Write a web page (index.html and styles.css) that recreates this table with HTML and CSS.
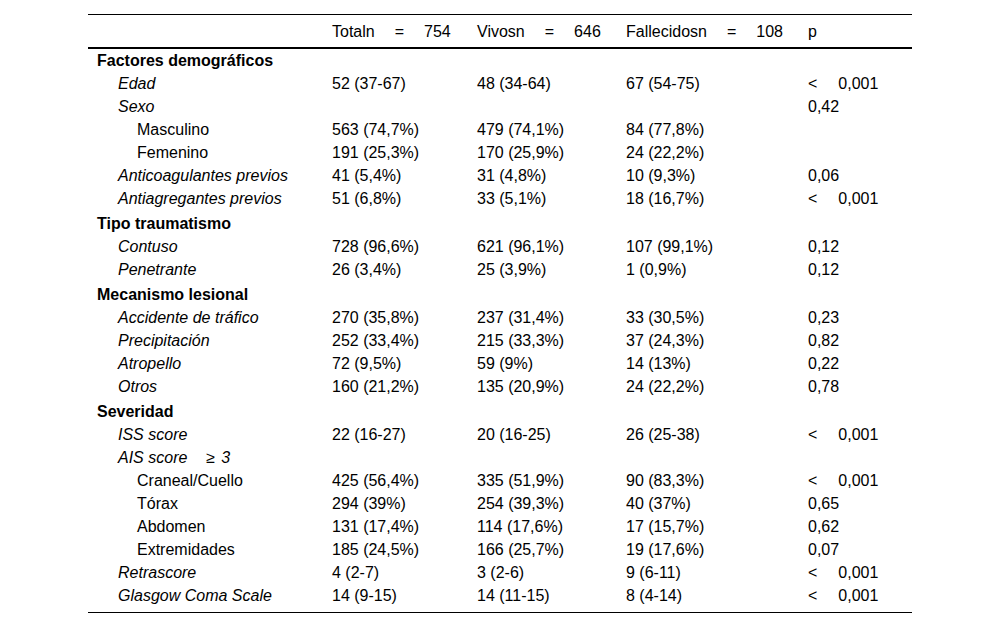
FILE: index.html
```html
<!DOCTYPE html>
<html lang="es">
<head>
<meta charset="utf-8">
<title>Tabla</title>
<link rel="stylesheet" href="styles.css">
</head>
<body>
<table class="data">
  <colgroup>
    <col class="c1"><col class="c2"><col class="c3"><col class="c4"><col class="c5">
  </colgroup>
  <thead>
    <tr>
      <th></th>
      <th>Totaln<span class="eq">=</span>754</th>
      <th>Vivosn<span class="eq">=</span>646</th>
      <th>Fallecidosn<span class="eq">=</span>108</th>
      <th>p</th>
    </tr>
  </thead>
  <tbody>
    <tr class="sec first"><td>Factores demográficos</td><td></td><td></td><td></td><td></td></tr>
    <tr><td class="l2">Edad</td><td>52 (37-67)</td><td>48 (34-64)</td><td>67 (54-75)</td><td><span class="lt">&lt;</span>0,001</td></tr>
    <tr><td class="l2">Sexo</td><td></td><td></td><td></td><td>0,42</td></tr>
    <tr><td class="l3">Masculino</td><td>563 (74,7%)</td><td>479 (74,1%)</td><td>84 (77,8%)</td><td></td></tr>
    <tr><td class="l3">Femenino</td><td>191 (25,3%)</td><td>170 (25,9%)</td><td>24 (22,2%)</td><td></td></tr>
    <tr><td class="l2">Anticoagulantes previos</td><td>41 (5,4%)</td><td>31 (4,8%)</td><td>10 (9,3%)</td><td>0,06</td></tr>
    <tr><td class="l2">Antiagregantes previos</td><td>51 (6,8%)</td><td>33 (5,1%)</td><td>18 (16,7%)</td><td><span class="lt">&lt;</span>0,001</td></tr>
    <tr class="sec"><td>Tipo traumatismo</td><td></td><td></td><td></td><td></td></tr>
    <tr><td class="l2">Contuso</td><td>728 (96,6%)</td><td>621 (96,1%)</td><td>107 (99,1%)</td><td>0,12</td></tr>
    <tr><td class="l2">Penetrante</td><td>26 (3,4%)</td><td>25 (3,9%)</td><td>1 (0,9%)</td><td>0,12</td></tr>
    <tr class="sec"><td>Mecanismo lesional</td><td></td><td></td><td></td><td></td></tr>
    <tr><td class="l2">Accidente de tráfico</td><td>270 (35,8%)</td><td>237 (31,4%)</td><td>33 (30,5%)</td><td>0,23</td></tr>
    <tr><td class="l2">Precipitación</td><td>252 (33,4%)</td><td>215 (33,3%)</td><td>37 (24,3%)</td><td>0,82</td></tr>
    <tr><td class="l2">Atropello</td><td>72 (9,5%)</td><td>59 (9%)</td><td>14 (13%)</td><td>0,22</td></tr>
    <tr><td class="l2">Otros</td><td>160 (21,2%)</td><td>135 (20,9%)</td><td>24 (22,2%)</td><td>0,78</td></tr>
    <tr class="sec"><td>Severidad</td><td></td><td></td><td></td><td></td></tr>
    <tr><td class="l2">ISS score</td><td>22 (16-27)</td><td>20 (16-25)</td><td>26 (25-38)</td><td><span class="lt">&lt;</span>0,001</td></tr>
    <tr><td class="l2">AIS score<span class="ge">≥</span>3</td><td></td><td></td><td></td><td></td></tr>
    <tr><td class="l3">Craneal/Cuello</td><td>425 (56,4%)</td><td>335 (51,9%)</td><td>90 (83,3%)</td><td><span class="lt">&lt;</span>0,001</td></tr>
    <tr><td class="l3">Tórax</td><td>294 (39%)</td><td>254 (39,3%)</td><td>40 (37%)</td><td>0,65</td></tr>
    <tr><td class="l3">Abdomen</td><td>131 (17,4%)</td><td>114 (17,6%)</td><td>17 (15,7%)</td><td>0,62</td></tr>
    <tr><td class="l3">Extremidades</td><td>185 (24,5%)</td><td>166 (25,7%)</td><td>19 (17,6%)</td><td>0,07</td></tr>
    <tr><td class="l2">Retrascore</td><td>4 (2-7)</td><td>3 (2-6)</td><td>9 (6-11)</td><td><span class="lt">&lt;</span>0,001</td></tr>
    <tr class="last"><td class="l2">Glasgow Coma Scale</td><td>14 (9-15)</td><td>14 (11-15)</td><td>8 (4-14)</td><td><span class="lt">&lt;</span>0,001</td></tr>
  </tbody>
</table>
</body>
</html>
```

FILE: styles.css
```css
html, body {
  margin: 0;
  padding: 0;
  background: #ffffff;
}

body {
  font-family: "Liberation Sans", Arial, sans-serif;
  font-size: 16px;
  color: #000000;
}

.data {
  width: 824px;
  margin: 14px auto 0;
  table-layout: fixed;
  border-collapse: collapse;
  border-top: 1px solid #000;
  border-bottom: 1px solid #000;
}

.c1 { width: 235px; }
.c2 { width: 145px; }
.c3 { width: 149px; }
.c4 { width: 182px; }
.c5 { width: 113px; }

.data th,
.data td {
  padding: 0 0 0 9px;
  text-align: left;
  vertical-align: middle;
  white-space: nowrap;
  font-weight: normal;
  line-height: 23px;
}

.data thead tr {
  border-bottom: 2px solid #000;
}

.data thead th {
  height: 31px;
  padding-top: 1px;
}

.eq {
  display: inline-block;
  margin: 0 20px 0 20px;
}

.lt {
  display: inline-block;
  margin-right: 21px;
}

.ge {
  display: inline-block;
  margin: 0 6px 0 19px;
}

.sec td {
  font-weight: bold;
  padding-top: 2px;
}

.sec.first td {
  padding-top: 0;
}

.l2 {
  font-style: italic;
}

.data td.l2 {
  padding-left: 30px;
}

.data td.l3 {
  padding-left: 49px;
}

.last td {
  padding-bottom: 5px;
}
```
